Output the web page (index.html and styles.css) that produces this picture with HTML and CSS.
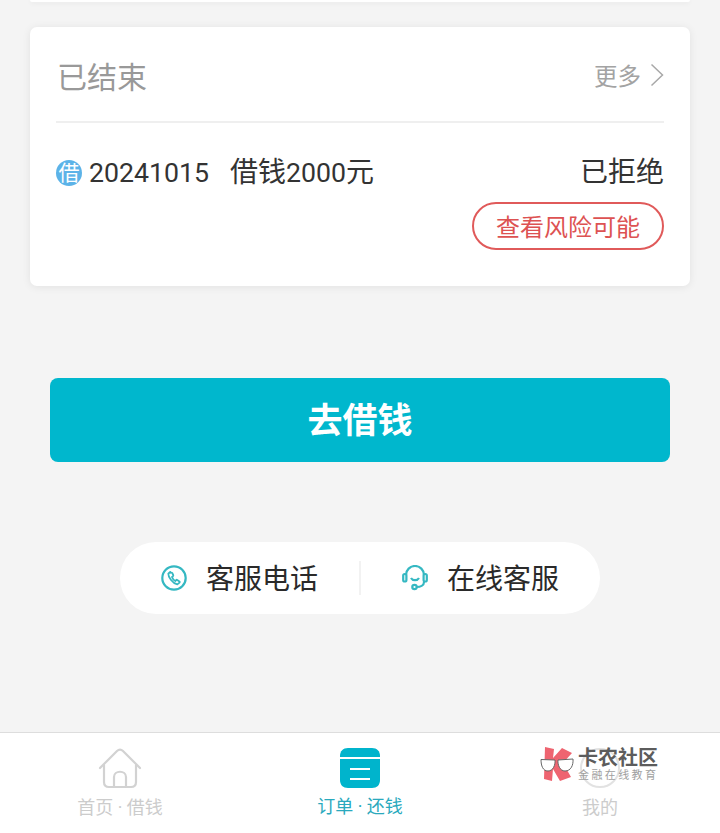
FILE: index.html
```html
<!DOCTYPE html>
<html lang="zh-CN">
<head>
    <meta charset="UTF-8">
    <meta name="viewport" content="width=device-width, initial-scale=1.0">
    <title>订单</title>
    <link rel="stylesheet" href="styles.css">
</head>
<body>
    <div class="page">
        <div class="prev-card"></div>

        <div class="card">
            <div class="card-head">
                <span class="card-title">已结束</span>
                <span class="card-more">更多
                    <svg class="more-arrow" width="14" height="24" viewBox="0 0 14 24"><path d="M1.500 1.500 12.500 12 1.500 22.500" fill="none" stroke="#a8a8a8" stroke-width="1.500"/></svg>
                </span>
            </div>
            <div class="order-row">
                <span class="order-name"><span class="order-badge">借</span><span class="order-num">20241015</span><span class="order-desc">借钱<span class="order-num">2000</span>元</span></span>
                <span class="order-status">已拒绝</span>
            </div>
            <div class="order-actions">
                <button class="risk-button">查看风险可能</button>
            </div>
        </div>

        <button class="borrow-button">去借钱</button>

        <div class="service">
            <div class="service-item">
                <svg width="26" height="26" viewBox="0 0 26 26" fill="none" stroke="#35b8c2" stroke-width="2.200"><circle cx="13" cy="13" r="11.700"/><path d="M9.200 6.800 7.300 8.600c-.2 3.400 4.500 10 9 10.800l2.200-1.800c.4-.4.300-.9-.1-1.200l-2.100-1.400c-.4-.3-.8-.2-1.100.1l-.9.900c-1.400-.7-2.800-2.500-3.300-4l1-.9c.3-.3.400-.7.200-1.100l-1-2.100c-.3-.5-1.400-.5-2 0z" stroke-linejoin="round" stroke-width="1.800"/></svg>
                <span>客服电话</span>
            </div>
            <div class="service-line"></div>
            <div class="service-item">
                <svg width="26" height="26" viewBox="0 0 26 26" fill="none" stroke="#35b8c2" stroke-width="2.200"><path d="M4 10a9 9 0 0 1 18 0"/><rect x="1.200" y="9" width="3.200" height="7.500" rx="1.600"/><rect x="21.600" y="9" width="3.200" height="7.500" rx="1.600"/><path d="M9 13c1.500 2.800 6.500 2.800 8 0"/><path d="M22 17c0 3-3 5-7.500 5"/><circle cx="12.500" cy="22" r="2.200"/></svg>
                <span>在线客服</span>
            </div>
        </div>
    </div>

    <div class="tabbar">
        <div class="tab">
            <svg width="44" height="42" viewBox="0 0 44 42" fill="none" stroke="#d2d2d2" stroke-width="2.200" stroke-linejoin="round" stroke-linecap="round"><path d="M2 21 19 4c2-2 4-2 6 0l17 17"/><path d="M6 18v17c0 3 2 5 5 5h22c3 0 5-2 5-5V18"/><path d="M16 40V30c0-7 12-7 12 0v10"/></svg>
            <span class="tab-label">首页 · 借钱</span>
        </div>
        <div class="tab tab-active">
            <svg width="40" height="41" viewBox="0 0 40 41"><path d="M0 9c0-5 3-8 8-8h24c5 0 8 3 8 8v1H0z" fill="#00b4cc"/><path d="M0 12h40v21c0 5-3 8-8 8H8c-5 0-8-3-8-8z" fill="#00b4cc"/><path d="M10 22h20M10 32h20" stroke="#fff" stroke-width="2"/></svg>
            <span class="tab-label">订单 · 还钱</span>
        </div>
        <div class="tab">
            <svg width="44" height="42" viewBox="0 0 44 42" fill="none" stroke="#e2e2e2" stroke-width="2"><circle cx="22" cy="21" r="19"/></svg>
            <span class="tab-label">我的</span>
        </div>

        <div class="watermark">
            <svg width="34" height="35" viewBox="0 0 34 35"><path d="M5 0 14 2 13 11 22 1 32 6 23 16 31 30 20 34 13 22 12 34 4 32z" fill="#ee6470"/><path d="M1 12.500 15 13c.5 5-2 11-7 11S1 19 1 12.500zM18 13l15-1c.5 6-2 12-8 12-5 0-7.500-6-7-11z" fill="#fff" stroke="#666" stroke-width="1"/></svg>
            <div class="watermark-text">
                <div class="watermark-name">卡农社区</div>
                <div class="watermark-sub">金融在线教育</div>
            </div>
        </div>
    </div>
</body>
</html>
```

FILE: styles.css
```css
* {
    box-sizing: border-box;
}
body {
    margin: 0;
    height: 833px;
    overflow: hidden;
    background-color: #f4f4f4;
    font-family: "Roboto", "Noto Sans CJK SC", sans-serif;
    color: #333333;
}
.page {
    height: 732px;
    padding: 0 30px;
}
.prev-card {
    height: 2px;
    background-color: #ffffff;
    border-radius: 0 0 6px 6px;
    box-shadow: 0 1px 5px rgba(0, 0, 0, 0.08);
}
.card {
    height: 259px;
    margin-top: 25px;
    padding: 0 26px;
    background-color: #ffffff;
    border-radius: 7px;
    box-shadow: 0 1px 8px rgba(0, 0, 0, 0.08);
}
.card-head {
    display: flex;
    justify-content: space-between;
    align-items: center;
    height: 96px;
    padding-top: 2px;
    border-bottom: 2px solid #efefef;
}
.card-title {
    margin-left: 1px;
    font-size: 30px;
    color: #999999;
}
.card-more {
    display: flex;
    align-items: center;
    gap: 9px;
    font-size: 23.500px;
    color: #a3a3a3;
}
.order-row {
    display: flex;
    justify-content: space-between;
    align-items: center;
    margin-top: 32px;
    font-size: 28px;
    line-height: 36px;
}
.order-name {
    display: flex;
    align-items: center;
}
.order-num {
    font-size: 26.700px;
}
.order-badge {
    width: 26px;
    height: 26px;
    margin-right: 7px;
    border-radius: 50%;
    background-color: #5cb3e8;
    color: #ffffff;
    font-size: 21px;
    line-height: 26px;
    text-align: center;
}
.order-desc {
    margin-left: 21px;
}
.order-actions {
    display: flex;
    justify-content: flex-end;
    margin-top: 11px;
}
.risk-button {
    width: 192px;
    height: 48px;
    padding: 0 0 2px;
    background-color: #ffffff;
    border: 2px solid #e05a5a;
    border-radius: 24px;
    color: #dd5252;
    font-family: inherit;
    font-size: 24px;
}
.borrow-button {
    display: block;
    width: 620px;
    height: 84px;
    margin: 92px 0 0 20px;
    padding: 0 0 5px;
    background-color: #00b7cd;
    border: none;
    border-radius: 8px;
    color: #ffffff;
    font-family: inherit;
    font-size: 35px;
    font-weight: 700;
}
.service {
    display: flex;
    align-items: center;
    width: 480px;
    height: 72px;
    margin: 80px 0 0 90px;
    background-color: #ffffff;
    border-radius: 36px;
}
.service-item {
    flex: 1;
    display: flex;
    justify-content: center;
    align-items: center;
    gap: 19px;
    font-size: 28px;
    color: #2a2a2a;
}
.service-item span {
    padding-bottom: 2px;
}
.service-line {
    width: 2px;
    height: 34px;
    background-color: #f2f2f2;
}
.tabbar {
    position: relative;
    display: flex;
    height: 101px;
    background-color: #ffffff;
    border-top: 1px solid #dddddd;
}
.tab {
    flex: 1;
    display: flex;
    flex-direction: column;
    align-items: center;
    padding-top: 14px;
}
.tab-label {
    margin-top: 7px;
    font-size: 18px;
    line-height: 24px;
    color: #cccccc;
}
.tab-active .tab-label {
    color: #2aa9bd;
}
.watermark {
    position: absolute;
    top: 13px;
    left: 540px;
    display: flex;
    align-items: center;
    gap: 4px;
}
.watermark-name {
    font-size: 20px;
    font-weight: 700;
    line-height: 24px;
    color: #5c5c5c;
}
.watermark-sub {
    font-size: 11px;
    line-height: 12px;
    letter-spacing: 2.400px;
    color: #a0a0a0;
}
```
